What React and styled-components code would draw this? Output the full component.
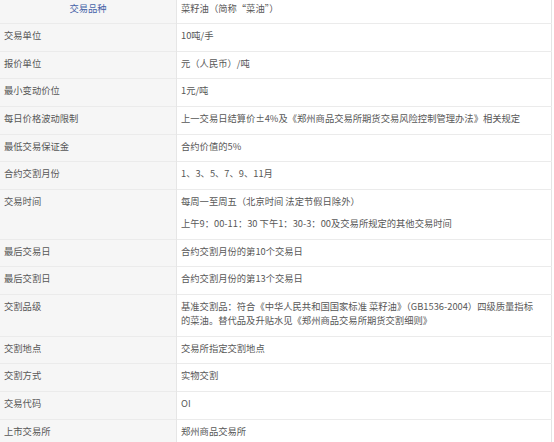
import React from "react";
import styled, { createGlobalStyle } from "styled-components";

const Global = createGlobalStyle`
  html, body { margin: 0; padding: 0; background: #ffffff; }
  body { font-family: "Noto Sans CJK SC", "Noto Sans", sans-serif; }
`;

const Page = styled.div`
  width: 554px;
  height: 442px;
  overflow: hidden;
  background: #fff;
`;

const Table = styled.table`
  width: 552px;
  border-collapse: collapse;
  table-layout: fixed;
  font-size: 9.3px;
  line-height: 14px;
  color: #575757;
  border-right: 1px solid #e4e4e4;
`;

const Row = styled.tr`
  border-bottom: 1px solid #ebebeb;
`;

const Label = styled.td`
  width: 168px;
  background: #f6f6f6;
  border-right: 1px solid #e6e6e6;
  vertical-align: top;
  padding: ${(p) => (p.$head ? "1px 4px 8px" : "4px 4px 8.67px")};
  text-align: ${(p) => (p.$head ? "center" : "left")};
  color: ${(p) => (p.$head ? "#4563a8" : "#575757")};
  white-space: nowrap;
`;

const Value = styled.td`
  vertical-align: top;
  padding: ${(p) => (p.$head ? "1px 4px 8px" : "4px 4px 8.67px")};
  white-space: nowrap;
`;

const Para = styled.div`
  & + & { margin-top: 8px; }
`;

const rows = [
  ["交易单位", ["10吨/手"]],
  ["报价单位", ["元（人民币）/吨"]],
  ["最小变动价位", ["1元/吨"]],
  ["每日价格波动限制", ["上一交易日结算价±4%及《郑州商品交易所期货交易风险控制管理办法》相关规定"]],
  ["最低交易保证金", ["合约价值的5%"]],
  ["合约交割月份", ["1、3、5、7、9、11月"]],
  ["交易时间", ["每周一至周五（北京时间 法定节假日除外）", "上午9：00-11：30 下午1：30-3：00及交易所规定的其他交易时间"]],
  ["最后交易日", ["合约交割月份的第10个交易日"]],
  ["最后交割日", ["合约交割月份的第13个交易日"]],
  ["交割品级", [
    <>基准交割品：符合《中华人民共和国国家标准 菜籽油》（GB1536-2004）四级质量指标<br />的菜油。替代品及升贴水见《郑州商品交易所期货交割细则》</>,
  ]],
  ["交割地点", ["交易所指定交割地点"]],
  ["交割方式", ["实物交割"]],
  ["交易代码", ["OI"]],
  ["上市交易所", ["郑州商品交易所"]],
];

export default function App() {
  return (
    <Page>
      <Global />
      <Table>
        <tbody>
          <Row>
            <Label $head>交易品种</Label>
            <Value $head>菜籽油（简称“菜油”）</Value>
          </Row>
          {rows.map(([label, paras]) => (
            <Row key={label}>
              <Label>{label}</Label>
              <Value>
                {paras.map((t, i) => (
                  <Para key={i}>{t}</Para>
                ))}
              </Value>
            </Row>
          ))}
        </tbody>
      </Table>
    </Page>
  );
}
